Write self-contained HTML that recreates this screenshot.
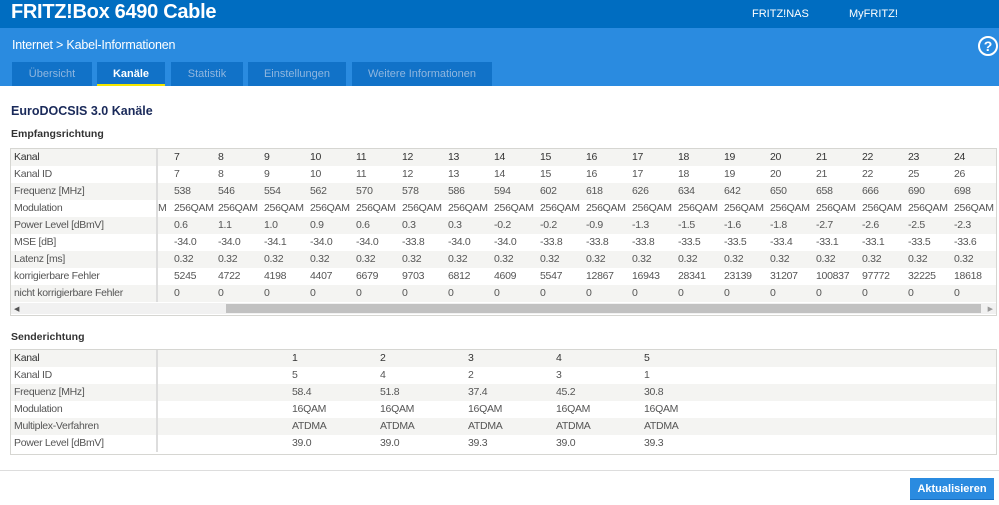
<!DOCTYPE html>
<html><head><meta charset="utf-8"><style>
*{margin:0;padding:0;box-sizing:border-box}
body{width:999px;height:505px;overflow:hidden;background:#fff;font-family:"Liberation Sans",sans-serif;color:#555;font-size:10.5px;position:relative}
.top{position:absolute;left:0;top:0;width:999px;height:28px;background:#006dc1}
.title{position:absolute;left:11px;top:1px;color:#fff;font-weight:bold;font-size:20px;letter-spacing:-0.3px}
.tl{position:absolute;top:8px;color:#fff;font-size:11px}
.bar2{position:absolute;left:0;top:28px;width:999px;height:58px;background:#2a8be0}
.crumb{position:absolute;left:12px;top:10px;color:#fff;font-size:12.5px;letter-spacing:-0.2px}
.help{position:absolute;left:978px;top:8px;width:20px;height:20px;border:2px solid #fff;border-radius:50%;color:#fff;font-weight:bold;font-size:14px;text-align:center;line-height:16px}
.tab{position:absolute;top:62px;height:24px;background:#1172c8;color:#8fb6df;font-size:11px;text-align:center;line-height:24px}
.tab.act{color:#fff;font-weight:bold;border-bottom:2px solid #f2e600}
h1{position:absolute;left:11px;top:104px;font-size:12.5px;color:#1a2a5a;font-weight:bold}
h2{position:absolute;font-size:10.5px;color:#333;font-weight:bold;left:11px}
.tbl{position:absolute;left:10px;border:1px solid #d6d6d2;overflow:hidden;background:#fff}
.row{height:17px;white-space:nowrap;display:flex;line-height:17px;letter-spacing:-0.3px}
.row:nth-child(odd){background:#f4f4f2}
.row span{flex:none;display:inline-block;overflow:hidden}
.lab{width:147px;padding-left:3px;border-right:2px solid #ddd}
.row:first-child{color:#333}
</style></head><body>
<div class="top"><div class="title">FRITZ!Box 6490 Cable</div><div class="tl" style="left:752px">FRITZ!NAS</div><div class="tl" style="left:849px">MyFRITZ!</div></div>
<div class="bar2"><div class="crumb">Internet &gt; Kabel-Informationen</div><div class="help">?</div></div>
<div class="tab" style="left:12px;width:80px">Übersicht</div>
<div class="tab act" style="left:97px;width:68px">Kanäle</div>
<div class="tab" style="left:171px;width:72px">Statistik</div>
<div class="tab" style="left:248px;width:98px">Einstellungen</div>
<div class="tab" style="left:352px;width:140px">Weitere Informationen</div>
<h1>EuroDOCSIS 3.0 Kanäle</h1>
<h2 style="top:128px">Empfangsrichtung</h2>
<div class="tbl" style="top:148px;width:987px;height:168px">
<div class="row"><span class="lab">Kanal</span><span style="width:14px"></span><span style="width:46px;padding-left:2px">7</span><span style="width:46px">8</span><span style="width:46px">9</span><span style="width:46px">10</span><span style="width:46px">11</span><span style="width:46px">12</span><span style="width:46px">13</span><span style="width:46px">14</span><span style="width:46px">15</span><span style="width:46px">16</span><span style="width:46px">17</span><span style="width:46px">18</span><span style="width:46px">19</span><span style="width:46px">20</span><span style="width:46px">21</span><span style="width:46px">22</span><span style="width:46px">23</span><span style="width:46px">24</span></div>
<div class="row"><span class="lab">Kanal ID</span><span style="width:14px"></span><span style="width:46px;padding-left:2px">7</span><span style="width:46px">8</span><span style="width:46px">9</span><span style="width:46px">10</span><span style="width:46px">11</span><span style="width:46px">12</span><span style="width:46px">13</span><span style="width:46px">14</span><span style="width:46px">15</span><span style="width:46px">16</span><span style="width:46px">17</span><span style="width:46px">18</span><span style="width:46px">19</span><span style="width:46px">20</span><span style="width:46px">21</span><span style="width:46px">22</span><span style="width:46px">25</span><span style="width:46px">26</span></div>
<div class="row"><span class="lab">Frequenz [MHz]</span><span style="width:14px"></span><span style="width:46px;padding-left:2px">538</span><span style="width:46px">546</span><span style="width:46px">554</span><span style="width:46px">562</span><span style="width:46px">570</span><span style="width:46px">578</span><span style="width:46px">586</span><span style="width:46px">594</span><span style="width:46px">602</span><span style="width:46px">618</span><span style="width:46px">626</span><span style="width:46px">634</span><span style="width:46px">642</span><span style="width:46px">650</span><span style="width:46px">658</span><span style="width:46px">666</span><span style="width:46px">690</span><span style="width:46px">698</span></div>
<div class="row"><span class="lab">Modulation</span><span style="width:14px;text-align:left">M</span><span style="width:46px;padding-left:2px">256QAM</span><span style="width:46px">256QAM</span><span style="width:46px">256QAM</span><span style="width:46px">256QAM</span><span style="width:46px">256QAM</span><span style="width:46px">256QAM</span><span style="width:46px">256QAM</span><span style="width:46px">256QAM</span><span style="width:46px">256QAM</span><span style="width:46px">256QAM</span><span style="width:46px">256QAM</span><span style="width:46px">256QAM</span><span style="width:46px">256QAM</span><span style="width:46px">256QAM</span><span style="width:46px">256QAM</span><span style="width:46px">256QAM</span><span style="width:46px">256QAM</span><span style="width:46px">256QAM</span></div>
<div class="row"><span class="lab">Power Level [dBmV]</span><span style="width:14px"></span><span style="width:46px;padding-left:2px">0.6</span><span style="width:46px">1.1</span><span style="width:46px">1.0</span><span style="width:46px">0.9</span><span style="width:46px">0.6</span><span style="width:46px">0.3</span><span style="width:46px">0.3</span><span style="width:46px">-0.2</span><span style="width:46px">-0.2</span><span style="width:46px">-0.9</span><span style="width:46px">-1.3</span><span style="width:46px">-1.5</span><span style="width:46px">-1.6</span><span style="width:46px">-1.8</span><span style="width:46px">-2.7</span><span style="width:46px">-2.6</span><span style="width:46px">-2.5</span><span style="width:46px">-2.3</span></div>
<div class="row"><span class="lab">MSE [dB]</span><span style="width:14px"></span><span style="width:46px;padding-left:2px">-34.0</span><span style="width:46px">-34.0</span><span style="width:46px">-34.1</span><span style="width:46px">-34.0</span><span style="width:46px">-34.0</span><span style="width:46px">-33.8</span><span style="width:46px">-34.0</span><span style="width:46px">-34.0</span><span style="width:46px">-33.8</span><span style="width:46px">-33.8</span><span style="width:46px">-33.8</span><span style="width:46px">-33.5</span><span style="width:46px">-33.5</span><span style="width:46px">-33.4</span><span style="width:46px">-33.1</span><span style="width:46px">-33.1</span><span style="width:46px">-33.5</span><span style="width:46px">-33.6</span></div>
<div class="row"><span class="lab">Latenz [ms]</span><span style="width:14px"></span><span style="width:46px;padding-left:2px">0.32</span><span style="width:46px">0.32</span><span style="width:46px">0.32</span><span style="width:46px">0.32</span><span style="width:46px">0.32</span><span style="width:46px">0.32</span><span style="width:46px">0.32</span><span style="width:46px">0.32</span><span style="width:46px">0.32</span><span style="width:46px">0.32</span><span style="width:46px">0.32</span><span style="width:46px">0.32</span><span style="width:46px">0.32</span><span style="width:46px">0.32</span><span style="width:46px">0.32</span><span style="width:46px">0.32</span><span style="width:46px">0.32</span><span style="width:46px">0.32</span></div>
<div class="row"><span class="lab">korrigierbare Fehler</span><span style="width:14px"></span><span style="width:46px;padding-left:2px">5245</span><span style="width:46px">4722</span><span style="width:46px">4198</span><span style="width:46px">4407</span><span style="width:46px">6679</span><span style="width:46px">9703</span><span style="width:46px">6812</span><span style="width:46px">4609</span><span style="width:46px">5547</span><span style="width:46px">12867</span><span style="width:46px">16943</span><span style="width:46px">28341</span><span style="width:46px">23139</span><span style="width:46px">31207</span><span style="width:46px">100837</span><span style="width:46px">97772</span><span style="width:46px">32225</span><span style="width:46px">18618</span></div>
<div class="row"><span class="lab">nicht korrigierbare Fehler</span><span style="width:14px"></span><span style="width:46px;padding-left:2px">0</span><span style="width:46px">0</span><span style="width:46px">0</span><span style="width:46px">0</span><span style="width:46px">0</span><span style="width:46px">0</span><span style="width:46px">0</span><span style="width:46px">0</span><span style="width:46px">0</span><span style="width:46px">0</span><span style="width:46px">0</span><span style="width:46px">0</span><span style="width:46px">0</span><span style="width:46px">0</span><span style="width:46px">0</span><span style="width:46px">0</span><span style="width:46px">0</span><span style="width:46px">0</span></div>
<div style="position:absolute;left:0;top:154px;width:985px;height:11px;background:#f1f1f1"><div style="position:absolute;left:215px;top:1px;width:755px;height:9px;background:#c1c1c1"></div><div style="position:absolute;left:3px;top:2px;font-size:7px;color:#555">◀</div><div style="position:absolute;right:3px;top:2px;font-size:7px;color:#999">▶</div></div>
</div>
<h2 style="top:331px">Senderichtung</h2>
<div class="tbl" style="top:349px;width:987px;height:106px">
<div class="row"><span class="lab">Kanal</span><span style="width:134px"></span><span style="width:88px">1</span><span style="width:88px">2</span><span style="width:88px">3</span><span style="width:88px">4</span><span style="width:88px">5</span></div>
<div class="row"><span class="lab">Kanal ID</span><span style="width:134px"></span><span style="width:88px">5</span><span style="width:88px">4</span><span style="width:88px">2</span><span style="width:88px">3</span><span style="width:88px">1</span></div>
<div class="row"><span class="lab">Frequenz [MHz]</span><span style="width:134px"></span><span style="width:88px">58.4</span><span style="width:88px">51.8</span><span style="width:88px">37.4</span><span style="width:88px">45.2</span><span style="width:88px">30.8</span></div>
<div class="row"><span class="lab">Modulation</span><span style="width:134px"></span><span style="width:88px">16QAM</span><span style="width:88px">16QAM</span><span style="width:88px">16QAM</span><span style="width:88px">16QAM</span><span style="width:88px">16QAM</span></div>
<div class="row"><span class="lab">Multiplex-Verfahren</span><span style="width:134px"></span><span style="width:88px">ATDMA</span><span style="width:88px">ATDMA</span><span style="width:88px">ATDMA</span><span style="width:88px">ATDMA</span><span style="width:88px">ATDMA</span></div>
<div class="row"><span class="lab">Power Level [dBmV]</span><span style="width:134px"></span><span style="width:88px">39.0</span><span style="width:88px">39.0</span><span style="width:88px">39.3</span><span style="width:88px">39.0</span><span style="width:88px">39.3</span></div>
</div>
<div style="position:absolute;left:0;top:470px;width:999px;height:1px;background:#ddd"></div>
<div style="position:absolute;left:910px;top:478px;width:84px;height:22px;background:#2a8be0;color:#fff;font-weight:bold;font-size:11px;text-align:center;line-height:22px;border-bottom:1px solid #1a70c0">Aktualisieren</div>
</body></html>
